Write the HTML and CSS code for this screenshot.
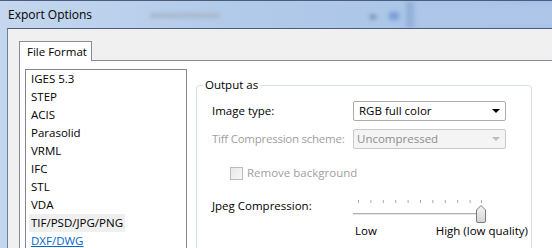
FILE: index.html
```html
<!DOCTYPE html>
<html lang="en-US">
<head>
	<meta charset="UTF-8">
	<title>Export Options</title>
	<link rel="stylesheet" href="styles.css">
</head>
<body>
	<div class="window">
		<div class="titlebar">
			<span class="title">Export Options</span>
			<!-- blurred glass behind the title bar -->
			<span class="glass glass_text"></span>
			<span class="glass glass_dot"></span>
			<span class="glass glass_icon"></span>
			<span class="glass glass_bar"></span>
			<span class="glass glass_field"></span>
		</div>
		<div class="client">
			<div class="tabs">
				<div class="tab">File Format</div>
			</div>
			<div class="tabpage">
				<ul class="formats">
					<li><span>IGES 5.3</span></li>
					<li><span>STEP</span></li>
					<li><span>ACIS</span></li>
					<li><span>Parasolid</span></li>
					<li><span>VRML</span></li>
					<li><span>IFC</span></li>
					<li><span>STL</span></li>
					<li><span>VDA</span></li>
					<li class="selected"><span>TIF/PSD/JPG/PNG</span></li>
					<li class="link"><span>DXF/DWG</span></li>
				</ul>
				<!-- formats end -->
				<fieldset class="output">
					<legend>Output as</legend>
					<div class="row">
						<label class="field_label">Image type:</label>
						<div class="combo">RGB full color<span class="arrow"></span></div>
					</div>
					<div class="row row_tiff">
						<label class="field_label disabled">Tiff Compression scheme:</label>
						<div class="combo combo_off">Uncompressed<span class="arrow"></span></div>
					</div>
					<div class="row row_check">
						<span class="checkbox"></span>
						<span class="disabled">Remove background</span>
					</div>
					<div class="row row_jpeg">
						<label class="field_label">Jpeg Compression:</label>
						<svg class="slider" width="140" height="28" viewBox="0 0 140 28">
							<defs>
								<linearGradient id="thumb" x1="0" y1="0" x2="0" y2="1">
									<stop offset="0" stop-color="#f6f6f6"/>
									<stop offset="1" stop-color="#d4d4d4"/>
								</linearGradient>
							</defs>
							<g stroke="#a8a8a8" stroke-width="1">
								<line x1="8.5" y1="2" x2="8.5" y2="5"/>
								<line x1="20.9" y1="2" x2="20.9" y2="5"/>
								<line x1="33.3" y1="2" x2="33.3" y2="5"/>
								<line x1="45.7" y1="2" x2="45.7" y2="5"/>
								<line x1="58.1" y1="2" x2="58.1" y2="5"/>
								<line x1="70.5" y1="2" x2="70.5" y2="5"/>
								<line x1="82.9" y1="2" x2="82.9" y2="5"/>
								<line x1="95.3" y1="2" x2="95.3" y2="5"/>
								<line x1="107.7" y1="2" x2="107.7" y2="5"/>
								<line x1="120.1" y1="2" x2="120.1" y2="5"/>
								<line x1="131.5" y1="2" x2="131.5" y2="5"/>
							</g>
							<rect x="3" y="15" width="130" height="1" fill="#b0b0b0"/>
							<rect x="3" y="16" width="130" height="1" fill="#e8e8e8"/>
							<path d="M126.5 12 L131 7.5 L135.5 12 V23 Q135.5 24.5 134 24.5 H128 Q126.5 24.5 126.5 23 Z" fill="url(#thumb)" stroke="#7c7c7c"/>
						</svg>
					</div>
					<div class="row row_scale">
						<span>Low</span>
						<span>High (low quality)</span>
					</div>
				</fieldset>
			</div>
			<!-- tabpage end -->
		</div>
	</div>
</body>
</html>
```

FILE: styles.css
```css
html, body {
	margin:0;
}
body {
	width:552px;
	height:248px;
	overflow:hidden;
	color:#000;
	font:11.5px/16px "Open Sans", "Noto Sans", sans-serif;
}
.window {
	display:flex;
	flex-direction:column;
	width:552px;
	height:248px;
	box-sizing:border-box;
	border-top:1px solid #4b5c7e;
	background:linear-gradient(90deg, #c4d7ee 0, #b3cbea 40%, #a6c2e7 100%);
}
.titlebar {
	position:relative;
	display:flex;
	align-items:center;
	flex:none;
	height:27px;
	padding-left:8px;
	overflow:hidden;
	font-size:12px;
}
.title {
	position:relative;
	z-index:1;
}
.glass {
	position:absolute;
	filter:blur(2px);
}
.glass_text {
	left:150px;
	top:12px;
	width:70px;
	height:5px;
	background:#a9b8cc;
}
.glass_dot {
	left:370px;
	top:14px;
	width:6px;
	height:4px;
	background:#6f84a6;
}
.glass_icon {
	left:389px;
	top:11px;
	width:10px;
	height:8px;
	background:#7a9fd4;
}
.glass_bar {
	left:406px;
	top:0;
	width:8px;
	height:27px;
	background:#93b0d8;
}
.glass_field {
	left:418px;
	top:4px;
	width:150px;
	height:20px;
	background:#adc6e8;
}
.client {
	flex:1;
	display:flex;
	flex-direction:column;
	margin-left:7px;
	border-top:1px solid #4b5c7e;
	border-left:1px solid #6e7f9c;
	background:#f0f0f0;
}
.tabs {
	display:flex;
	padding:12px 0 0 11px;
}
.tab {
	position:relative;
	z-index:1;
	width:73px;
	height:20px;
	box-sizing:border-box;
	margin-bottom:-1px;
	padding-left:7px;
	border:1px solid #898c95;
	border-bottom:none;
	background:#fff;
	line-height:19px;
}
.tabpage {
	flex:1;
	display:flex;
	align-items:flex-start;
	margin:0 -20px 0 11px;
	padding:8px 0 0 5px;
	border:1px solid #898c95;
	background:#fff;
}
.formats {
	flex:none;
	width:162px;
	height:200px;
	box-sizing:border-box;
	margin:0;
	padding:0 0 0 3px;
	list-style:none;
	border:1px solid #828790;
}
.formats li {
	height:18px;
	line-height:18px;
}
.formats li span {
	display:inline-block;
	padding:0 2px;
}
.formats .selected span {
	background:#efefef;
}
.formats .link span {
	color:#0066cc;
	text-decoration:underline;
}
.output {
	flex:none;
	width:336px;
	height:200px;
	box-sizing:border-box;
	margin:8px 0 0 9px;
	padding:8px 0 0 15px;
	border:1px solid #d5dfe5;
	border-radius:3px;
}
.output legend {
	margin-left:-9px;
	padding:0 2px;
	line-height:16px;
}
.row {
	display:flex;
	align-items:center;
	height:20px;
	white-space:nowrap;
}
.field_label {
	width:141px;
	flex:none;
}
.disabled {
	color:#a0a0a0;
}
.row_tiff {
	margin-top:8px;
}
.row_tiff .field_label {
	letter-spacing:-0.25px;
}
.combo {
	position:relative;
	width:153px;
	height:20px;
	box-sizing:border-box;
	padding-left:5px;
	border:1px solid #acacac;
	border-radius:2px;
	background:#fff;
	line-height:18px;
}
.combo_off {
	padding-left:3px;
	border-color:#c9c9c9;
	background:#f4f4f4;
	color:#8d8d8d;
}
.arrow {
	position:absolute;
	right:5px;
	top:7px;
	border:4px solid transparent;
	border-top-color:#000;
	border-bottom:none;
}
.combo_off .arrow {
	border-top-color:#bcbcbc;
}
.row_check {
	margin-top:14px;
	padding-left:18px;
}
.checkbox {
	width:13px;
	height:13px;
	box-sizing:border-box;
	margin-right:4px;
	border:1px solid #bcbcbc;
	background:linear-gradient(135deg, #e8e8e8, #f8f8f8);
}
.row_jpeg {
	align-items:flex-start;
	height:26px;
	margin-top:15px;
}
.slider {
	display:block;
	margin:0 0 0 -3px;
}
.row_scale {
	justify-content:space-between;
	width:173px;
	height:14px;
	padding-left:143px;
	line-height:14px;
}
```
